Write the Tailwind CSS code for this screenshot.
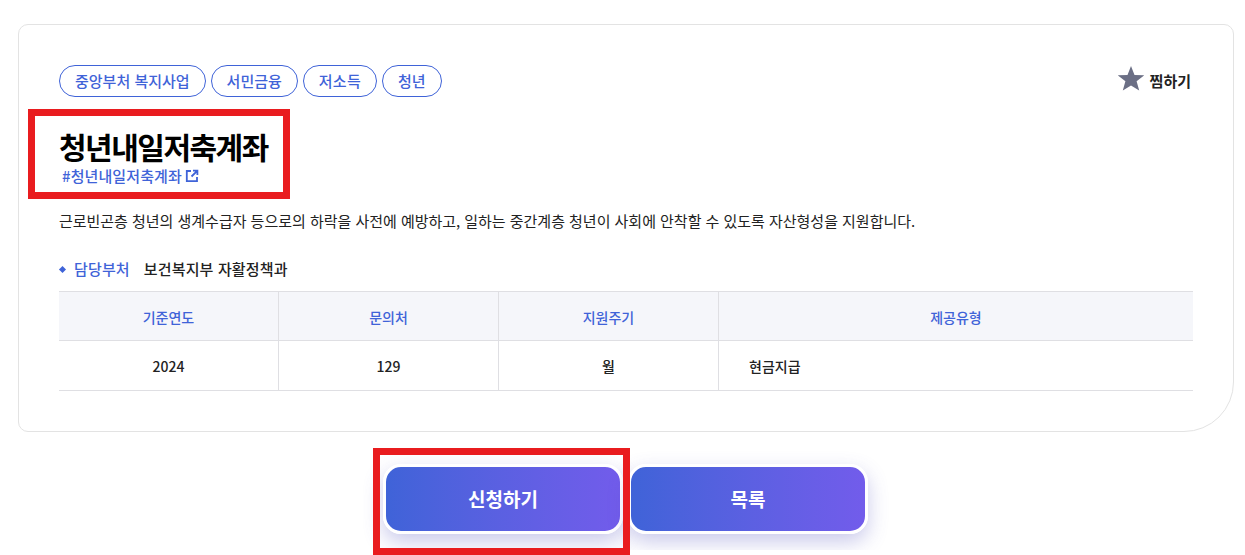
<!DOCTYPE html>
<html lang="ko">
<head>
<meta charset="utf-8">
<script src="https://cdn.jsdelivr.net/npm/@tailwindcss/browser@4"></script>
</head>
<body class="bg-white font-['Noto_Sans_CJK_KR','Noto_Sans',sans-serif] text-[#111] overflow-hidden">
<div class="relative w-[1245px] h-[555px] overflow-hidden pt-6 pl-[18px]">
  <section class="w-[1216px] h-[408px] border border-[#e3e3e3] rounded-[10px] rounded-br-[50px] pt-10 pl-10 pr-10">
    <div class="flex items-start justify-between h-8">
      <div class="flex gap-[5px]">
        <span class="h-8 px-[15px] flex items-center rounded-full border border-[#3f63d8] text-[#3f63d8] text-[15px] font-medium">중앙부처 복지사업</span>
        <span class="h-8 px-[15px] flex items-center rounded-full border border-[#3f63d8] text-[#3f63d8] text-[15px] font-medium">서민금융</span>
        <span class="h-8 px-[15px] flex items-center rounded-full border border-[#3f63d8] text-[#3f63d8] text-[15px] font-medium tracking-[0.25px]">저소득</span>
        <span class="h-8 px-[15px] flex items-center rounded-full border border-[#3f63d8] text-[#3f63d8] text-[15px] font-medium">청년</span>
      </div>
      <div class="flex items-center gap-[6px] mr-[2px] mt-[1px]">
        <svg class="w-[26px] h-[26px]" viewBox="0 0 26 26"><path fill="#6b6f85" d="M13 0l3.5 8.9 9.7.4-7.6 6 2.6 9.2L13 19.5l-8.2 5 2.6-9.2-7.6-6 9.7-.4z"/></svg>
        <span class="text-[15px] font-bold text-[#222] mt-[4px]">찜하기</span>
      </div>
    </div>
    <h1 class="mt-[29px] text-[30px] leading-[40px] font-bold text-black tracking-[-1.5px]">청년내일저축계좌</h1>
    <a class="ml-[3px] flex items-center gap-[3px] h-5 text-[#3f63d8] text-[15px] font-medium tracking-[0.1px]">#청년내일저축계좌
      <svg class="w-[14px] h-[14px]" viewBox="0 0 14 14" fill="none" stroke="#3f63d8" stroke-width="1.8"><path d="M6 2H1.8v10.2H12V8"/><path d="M8 1.6h4.4V6M12.2 1.8 6.5 7.5"/></svg>
    </a>
    <p class="mt-[23px] text-[15px] leading-[24px] text-[#222] tracking-[-0.025px]">근로빈곤층 청년의 생계수급자 등으로의 하락을 사전에 예방하고, 일하는 중간계층 청년이 사회에 안착할 수 있도록 자산형성을 지원합니다.</p>
    <div class="mt-[24px] flex items-center h-6 text-[15px] font-medium tracking-[0.15px]">
      <span class="w-[5px] h-[5px] bg-[#3f63d8] rotate-45 ml-[1px]"></span>
      <span class="ml-[9px] text-[#3f63d8]">담당부처</span>
      <span class="ml-[14px] text-[#222]">보건복지부 자활정책과</span>
    </div>
    <div class="mt-[10px] w-[1134px] border-t border-[#dfdfe3] text-[14px] font-medium">
      <div class="grid grid-cols-[220px_220px_220px_1fr] h-[49px] bg-[#f5f6fa] border-b border-[#dfdfe3] text-[#3f63d8] text-center">
        <div class="flex items-center justify-center pt-[2px] border-r border-[#dfdfe3]">기준연도</div>
        <div class="flex items-center justify-center pt-[2px] border-r border-[#dfdfe3]">문의처</div>
        <div class="flex items-center justify-center pt-[2px] border-r border-[#dfdfe3]">지원주기</div>
        <div class="flex items-center justify-center pt-[2px]">제공유형</div>
      </div>
      <div class="grid grid-cols-[220px_220px_220px_1fr] h-[50px] border-b border-[#dfdfe3] text-[#222] text-center">
        <div class="flex items-center justify-center pt-[2px] border-r border-[#dfdfe3]">2024</div>
        <div class="flex items-center justify-center pt-[2px] border-r border-[#dfdfe3]">129</div>
        <div class="flex items-center justify-center pt-[2px] border-r border-[#dfdfe3]">월</div>
        <div class="flex items-center pl-[30px] pt-[2px]">현금지급</div>
      </div>
    </div>
  </section>
  <div class="mt-[12px] ml-[345px] w-[540px] h-[106px] overflow-hidden pt-[20px] pl-[20px] flex gap-[5px]">
    <button class="w-[240px] h-[70px] border-[3px] border-white rounded-[18px] bg-gradient-to-r from-[#3f63d8] to-[#725ceb] text-white text-[19px] font-bold shadow-[0_8px_20px_rgba(80,80,190,0.3)]">신청하기</button>
    <button class="w-[240px] h-[70px] border-[3px] border-white rounded-[18px] bg-gradient-to-r from-[#3f63d8] to-[#725ceb] text-white text-[19px] font-bold shadow-[0_8px_20px_rgba(80,80,190,0.3)]">목록</button>
  </div>
  <div class="absolute left-[28px] top-[109px] w-[262px] h-[90px] border-[7px] border-[#e91c1f]"></div>
  <div class="absolute left-[373px] top-[448px] w-[257px] h-[107px] border-[7px] border-[#e91c1f]"></div>
</div>
</body>
</html>
